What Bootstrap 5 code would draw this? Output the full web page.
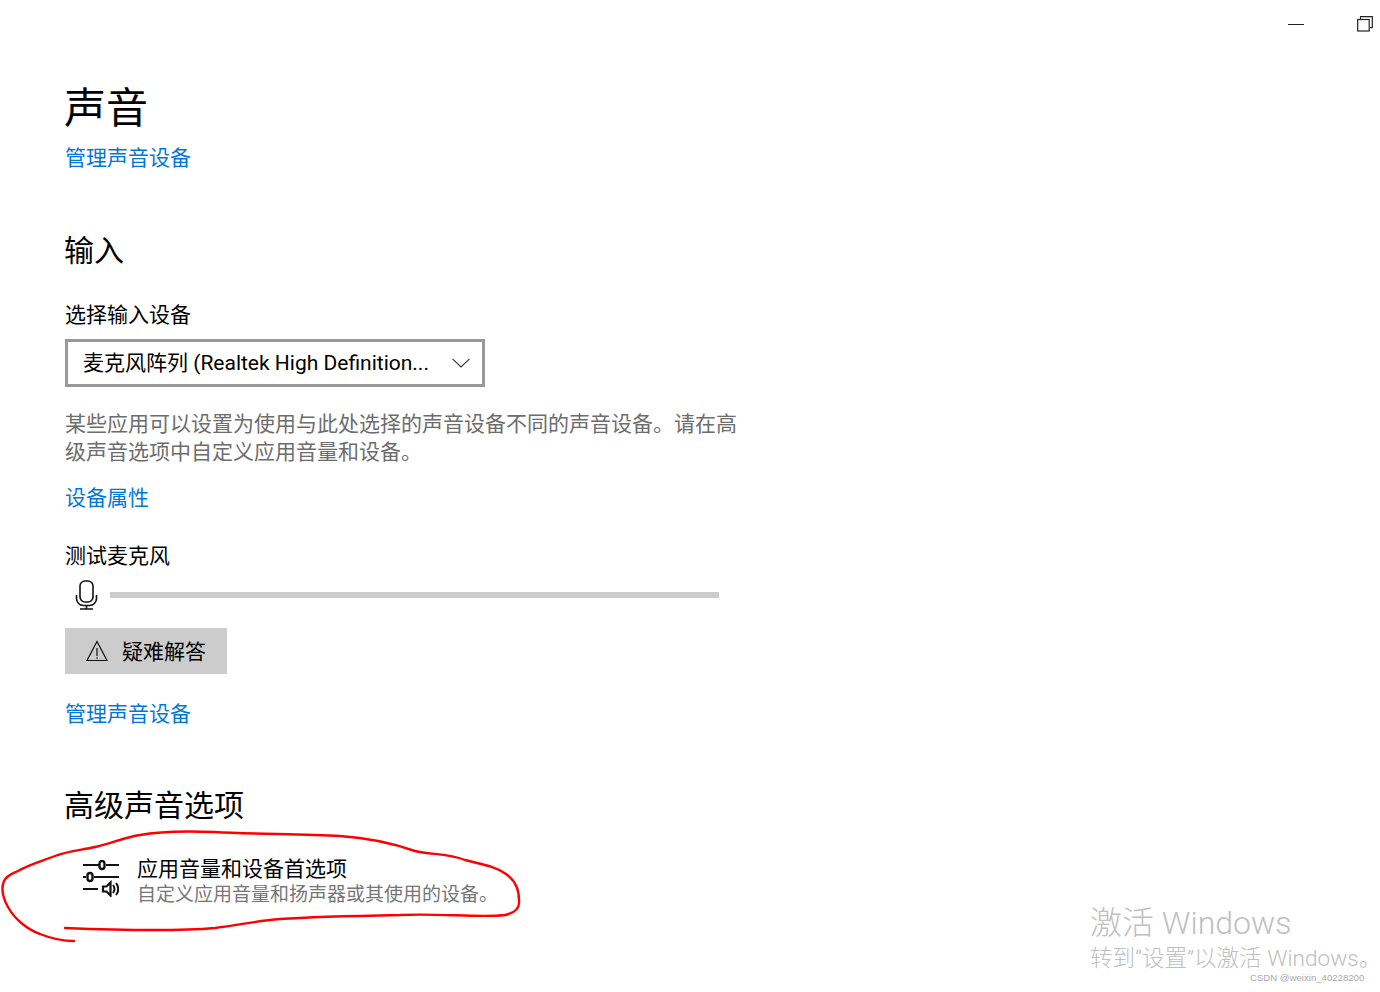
<!DOCTYPE html>
<html lang="zh-CN">
<head>
  <meta charset="UTF-8" />
  <meta name="viewport" content="width=device-width, initial-scale=1.0"/>
  <title>声音</title>
  <link href="https://cdn.jsdelivr.net/npm/bootstrap@5.3.3/dist/css/bootstrap.min.css" rel="stylesheet">
  <style>
    html, body { height: 992px; overflow: hidden; }
    body { position: relative; background: #fff; color: #000; font-family: Roboto, "Noto Sans CJK SC", sans-serif; font-size: 21px; line-height: 28px; }
    a.set-link { color: #0078d7; text-decoration: none; display: block; width: fit-content; }
    .win-bar { height: 48px; padding-right: 7px; gap: 53px; }
    .page-body { padding-left: 65px; }
    .page-title { font-size: 42px; line-height: 56px; font-weight: 400; margin: 33px 0 0 -1px; }
    .sect-title { font-size: 30px; line-height: 40px; font-weight: 400; margin: 0 0 0 -1px; }
    .title-link { margin-top: 7px; }
    .sect-input { margin-top: 59px; }
    .field-label { margin-top: 30px; }
    .device-select { width: 420px; height: 48px; margin-top: 10px; padding: 0 12px 0 15px; border: 3px solid #999; border-radius: 0; background: #fff; color: #000; font-size: 21px; line-height: 28px; }
    .help-text { width: 680px; color: #6d6d6d; margin: 23px 0 0; }
    .props-link { margin-top: 18px; }
    .test-label { margin-top: 30px; }
    .mic-row { width: 654px; margin-top: 8px; height: 34px; }
    .mic-row svg { margin-left: 10px; margin-right: 12px; }
    .level-bar { width: 609px; height: 6px; background: #ccc; border-radius: 0; }
    .trouble-btn { width: 162px; height: 46px; margin-top: 16px; padding: 0 0 0 21px; gap: 14px; background: #ccc; color: #000; border: 0; border-radius: 0; font-size: 21px; line-height: 28px; }
    .trouble-label { padding-top: 2px; }
    .manage-link { margin-top: 26px; }
    .sect-advanced { margin-top: 58px; }
    .pref-row { margin-top: 30px; margin-left: 18px; gap: 18px; }
    .pref-main { line-height: 26px; }
    .pref-sub { color: #767676; font-size: 19px; line-height: 25px; }
    .red-mark { position: absolute; left: 0; top: 0; pointer-events: none; }
    .activate-mark { position: absolute; left: 1090px; top: 903px; color: #c0c0c0; white-space: nowrap; }
    .activate-big { font-size: 32px; line-height: 40px; font-weight: 300; }
    .activate-small { font-size: 22.6px; line-height: 30px; font-weight: 300; margin-top: 1px; }
    .csdn-mark { position: absolute; left: 1250px; top: 971px; color: #aaa; font-family: "Liberation Sans", sans-serif; font-size: 9.6px; line-height: 13px; white-space: nowrap; }
  </style>
</head>
<body>

  <!-- Window buttons -->
  <div class="win-bar d-flex justify-content-end align-items-center">
    <svg width="16" height="16" viewBox="0 0 16 16"><path d="M0 8.500h16" stroke="#222" fill="none"/></svg>
    <svg width="16" height="16" viewBox="0 0 16 16" fill="none" stroke="#222" stroke-width="1.2"><path d="M3.500 3V.7h11.800v11H13"/><rect x=".7" y="3.500" width="11.500" height="11.500"/></svg>
  </div>

  <div class="page-body">
    <h1 class="page-title">声音</h1>
    <a class="set-link title-link" href="#">管理声音设备</a>

    <!-- Input -->
    <h2 class="sect-title sect-input">输入</h2>
    <div class="field-label">选择输入设备</div>
    <button class="btn device-select d-flex justify-content-between align-items-center" type="button">
      <span>麦克风阵列 (Realtek High Definition...</span>
      <svg width="18" height="10" viewBox="0 0 18 10" fill="none" stroke="#333" stroke-width="1.1"><path d="M.5.8 9 9 17.500.8"/></svg>
    </button>
    <p class="help-text">某些应用可以设置为使用与此处选择的声音设备不同的声音设备。请在高级声音选项中自定义应用音量和设备。</p>
    <a class="set-link props-link" href="#">设备属性</a>

    <div class="test-label">测试麦克风</div>
    <div class="mic-row d-flex align-items-center">
      <svg width="23" height="30" viewBox="0 0 23 30" fill="none" stroke="#111" stroke-width="1.6">
        <rect x="5" y="1" width="13" height="21" rx="5"/>
        <path d="M1.500 15v3.500a7 7 0 0 0 7 7h6a7 7 0 0 0 7-7V15M11.500 25.500V29M5 29h13"/>
      </svg>
      <div class="progress level-bar"><div class="progress-bar" style="width: 0%"></div></div>
    </div>
    <button class="btn trouble-btn d-flex align-items-center" type="button">
      <svg width="22" height="22" viewBox="0 0 22 22" fill="none" stroke="#111" stroke-width="1.2"><path d="M11 1.500 21 20.500H1Z"/><path d="M11 8v8M11 17.200v1.600"/></svg>
      <span class="trouble-label">疑难解答</span>
    </button>
    <a class="set-link manage-link" href="#">管理声音设备</a>

    <!-- Advanced -->
    <h2 class="sect-title sect-advanced">高级声音选项</h2>
    <div class="pref-row d-flex align-items-start">
      <svg class="mt-1" width="36" height="37" viewBox="0 0 36 37" fill="none" stroke="#111" stroke-width="2">
        <path d="M0 5h16M23 5h13M0 17h3M11 17h25M0 29h15"/>
        <rect x="16.500" y="1" width="5" height="8" rx="2.500" stroke-width="2.400"/>
        <rect x="4.500" y="13" width="5" height="8" rx="2.500" stroke-width="2.400"/>
        <path d="M20 26.500h3.500l4-4v13l-4-4H20Z" fill="#fff" stroke-width="2.200"/>
        <path d="M30 25q3 4 0 8M33 23q4.500 6 0 12"/>
      </svg>
      <div>
        <div class="pref-main">应用音量和设备首选项</div>
        <div class="pref-sub">自定义应用音量和扬声器或其使用的设备。</div>
      </div>
    </div>
  </div>

  <!-- Red pen mark drawn over the screenshot -->
  <svg class="red-mark" width="1380" height="992" viewBox="0 0 1380 992" fill="none" stroke="#f00" stroke-width="2.400" stroke-linecap="round" stroke-linejoin="round">
    <path d="M74 941C62 941 50 938 40 934 26 929 14 918 8 907 3 898 1 888 4 881 7 875 12 874 18 871 30 864 42 861 55 856 68 851 82 850 95 847 110 844 125 837 140 835 160 831 190 831 215 832 250 834 300 834 340 836 370 838 395 844 415 851 430 855 447 853 465 860 480 864 495 866 506 874 516 881 519 890 519 900 520 908 515 913 505 915 480 918 440 913 400 915 350 916 310 917 280 919 255 921 240 925 215 928 180 931 140 931 65 928"/>
  </svg>

  <div class="activate-mark">
    <div class="activate-big">激活 Windows</div>
    <div class="activate-small">转到“设置”以激活 Windows。</div>
  </div>
  <div class="csdn-mark">CSDN @weixin_40228200</div>

  <script src="https://cdn.jsdelivr.net/npm/bootstrap@5.3.3/dist/js/bootstrap.bundle.min.js"></script>
</body>
</html>
